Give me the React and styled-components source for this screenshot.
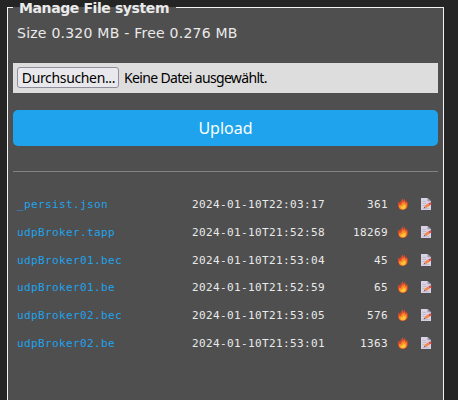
import React from "react";
import styled, { createGlobalStyle } from "styled-components";

const GlobalStyle = createGlobalStyle`
  * { box-sizing: border-box; }
  body {
    margin: 0;
    background: #252525;
    color: #eaeaea;
    font-family: "DejaVu Sans", Verdana, sans-serif;
    overflow: hidden;
  }
`;

const Page = styled.main`
  height: 400px;
  padding-left: 7px;
  overflow: hidden;
`;

const Panel = styled.fieldset`
  width: 437px;
  height: 440px;
  margin: 0;
  padding: 0 5px;
  border: 1px solid #f4f4f4;
  background: #4f4f4f;
`;

const Title = styled.legend`
  width: 163px;
  height: 15px;
  padding: 0 6px;
  font-size: 14px;
  font-weight: bold;
  line-height: 17px;
  letter-spacing: -0.4px;
  white-space: nowrap;
`;

const Usage = styled.p`
  height: 36px;
  margin: 0;
  padding-left: 4px;
  font-size: 14px;
  line-height: 36px;
  letter-spacing: 0.24px;
  white-space: nowrap;
`;

const FilePicker = styled.div`
  display: flex;
  align-items: center;
  height: 30px;
  margin-top: 12px;
  padding: 0 4px 2px;
  gap: 5px;
  background: #dddddd;
  color: #000;
  font: 14px/20px "Noto Sans", sans-serif;
  white-space: nowrap;
`;

const BrowseButton = styled.button`
  width: 102px;
  height: 21px;
  padding: 0;
  border: 1px solid #8f8f9d;
  border-radius: 3px;
  background: #e9e9ed;
  color: #000;
  font: inherit;
  line-height: 19px;
  padding-left: 1px;
  letter-spacing: -0.35px;
`;

const FileStatus = styled.span`
  padding-top: 2px;
  letter-spacing: -0.66px;
`;

const UploadButton = styled.button`
  display: block;
  width: 100%;
  height: 36px;
  margin: 17px 0 0;
  padding: 0;
  border: 0;
  border-radius: 5px;
  background: #1fa3ec;
  color: #faffff;
  font: 16px/36px "Noto Sans", sans-serif;
`;

const Divider = styled.hr`
  height: 1px;
  margin: 25px 0 18px;
  border: 0;
  background: #828282;
`;

const FileList = styled.div`
  padding-left: 4px;
  font: 11px/29px "DejaVu Sans Mono", monospace;
  letter-spacing: 0.38px;
`;

const FileRow = styled.div`
  display: grid;
  grid-template-columns: 175px 133px 63px 9px 12px 11px 12px;
  align-items: center;
  height: 27.8px;
  white-space: nowrap;
`;

const FileLink = styled.a`
  color: #1fa3ec;
  text-decoration: none;
`;

const Size = styled.span`
  text-align: right;
`;

const Icon = styled.svg`
  display: block;
  width: 12px;
  height: 12px;
  margin-bottom: 1.2px;
  grid-column: ${({ $column }) => $column};
`;

function FireIcon() {
  return (
    <Icon $column={5} viewBox="0 0 12 12" aria-label="Delete">
      <path fill="#d94b2d" d="M5.2 0C6 1 6.2 2 6 3L7.5.7C8 2.2 8.7 3.2 9.1 4l.8-1.3C11.4 6.2 11 8.4 9.7 10.2 8.1 12.5 3.6 12.4 2 10.2.4 8 .9 5.3 1.8 3.2l.7 1.5C4.3 3.4 4.8 1.8 5.2 0Z" />
      <path fill="#f88b25" d="M5.6 3.2 6 5l1.5-2L8 5.8l1.3-1.2c1 3.9.4 6.8-3.2 6.9C2.5 11.6 1.4 9 2.3 6.4l1 .9C4.8 5.9 5.3 4.7 5.6 3.2Z" />
      <path fill="#ffc33a" d="M6.5 5.4c.2 1 .3 1.4-.1 2.3L8.1 6.5c1.3 2.5.6 4.6-1.8 4.7-2.2 0-3.2-1.3-2.5-3l.7.6C5.8 8 6.5 6.8 6.5 5.4Z" />
    </Icon>
  );
}

function EditIcon() {
  return (
    <Icon $column={7} viewBox="0 0 12 12" aria-label="Edit">
      <path fill="#d9d3e4" d="M1 0H7.5L11 3.3V12H1Z" />
      <path fill="#9c95ab" d="M7.5 0v3.3H11Z" />
      <path stroke="#b8b0c5" strokeWidth=".7" d="M2.5 3.5H6M2.5 5.5h3.8M2.5 7.5h2M2.5 10.7h7" />
      <path stroke="#f28a43" strokeWidth="2.7" d="m5.2 9.2 3.6-2.7" />
      <path stroke="#e14d4d" strokeWidth="2.4" d="m8.8 6.5 2.4-1.3" />
      <path fill="#665461" d="m3.7 10.2.7-1.6 1 1.4Z" />
    </Icon>
  );
}

const files = [
  ["_persist.json", "2024-01-10T22:03:17", 361],
  ["udpBroker.tapp", "2024-01-10T21:52:58", 18269],
  ["udpBroker01.bec", "2024-01-10T21:53:04", 45],
  ["udpBroker01.be", "2024-01-10T21:52:59", 65],
  ["udpBroker02.bec", "2024-01-10T21:53:05", 576],
  ["udpBroker02.be", "2024-01-10T21:53:01", 1363],
];

export default function App() {
  return (
    <Page>
      <GlobalStyle />
      <Panel>
        <Title>Manage File system</Title>
        <Usage>Size 0.320 MB - Free 0.276 MB</Usage>
        <FilePicker>
          <BrowseButton>Durchsuchen...</BrowseButton>
          <FileStatus>Keine Datei ausgewählt.</FileStatus>
        </FilePicker>
        <UploadButton>Upload</UploadButton>
        <Divider />
        <FileList>
          {files.map(([name, date, size]) => (
            <FileRow key={name}>
              <FileLink>{name}</FileLink>
              <time>{date}</time>
              <Size>{size}</Size>
              <FireIcon />
              <EditIcon />
            </FileRow>
          ))}
        </FileList>
      </Panel>
    </Page>
  );
}
